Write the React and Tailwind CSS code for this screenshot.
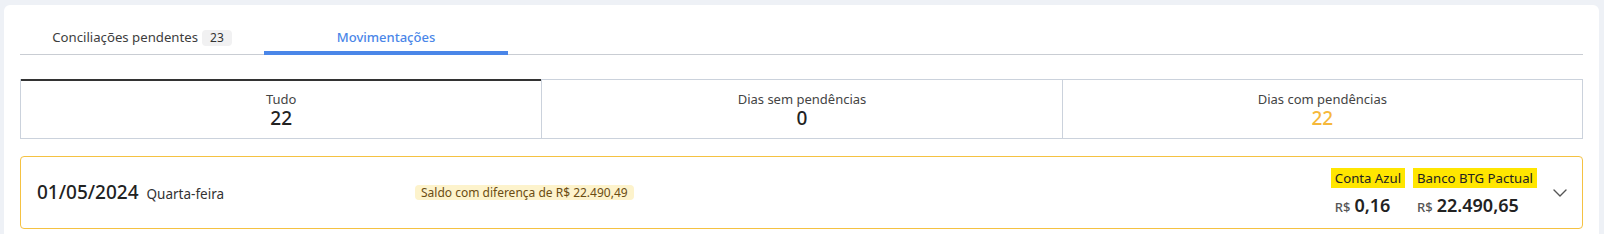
import { ChevronDown } from 'lucide-react'

const filters = [
  { label: 'Tudo', value: '22', active: true },
  { label: 'Dias sem pendências', value: '0' },
  { label: 'Dias com pendências', value: '22', warn: true },
]

function Tabs() {
  return (
    <div className="flex border-b border-[#c9cdd3]">
      <button className="flex h-[33px] w-[244px] items-center justify-center gap-1 text-[13.2px] text-[#3d3d3d]">
        Conciliações pendentes
        <span className="rounded-[4px] bg-[#f1f1f2] px-2 py-px text-[12px] leading-[14px] text-[#333]">23</span>
      </button>
      <button className="relative flex h-[33px] w-[244px] items-center justify-center text-[13px] font-medium text-[#4a86e8]">
        Movimentações
        <span className="absolute inset-x-0 -bottom-px h-[4px] bg-[#4a86e8]" />
      </button>
    </div>
  )
}

function FilterBar() {
  return (
    <div className="mt-6 grid grid-cols-3 border-x border-b border-[#cbd2dc]">
      {filters.map((item, index) => (
        <div
          key={item.label}
          className={`flex flex-col items-center pt-[10px] pb-[9px] ${
            item.active ? 'border-t-2 border-t-[#333]' : 'border-t border-t-[#cbd2dc] pt-[11px]'
          } ${index > 0 ? 'border-l border-l-[#cbd2dc]' : ''}`}
        >
          <span className="text-[13px] leading-4 text-[#444]">{item.label}</span>
          <span className={`text-[19px] font-medium leading-[22px] ${item.warn ? 'text-[#f6b83a]' : 'text-[#222]'}`}>
            {item.value}
          </span>
        </div>
      ))}
    </div>
  )
}

function Balance({ bank, amount }) {
  return (
    <div className="flex flex-col items-start">
      <span className="bg-[#ffe600] px-1 text-[13.2px] leading-5 text-[#222]">{bank}</span>
      <span className="mt-[6px] flex items-baseline gap-1 pl-1 text-[#222]">
        <span className="text-[13px] font-medium text-[#555]">R$</span>
        <span className="text-[18px] font-semibold leading-[22px]">{amount}</span>
      </span>
    </div>
  )
}

function DayCard() {
  return (
    <div className="mt-[17px] flex h-[73px] items-center rounded-[4px] border border-[#f5c242] pl-4 pr-[10px]">
      <div className="flex w-[378px] items-baseline gap-2">
        <span className="text-[19px] font-medium text-[#222]">01/05/2024</span>
        <span className="text-[13.5px] text-[#333]">Quarta-feira</span>
      </div>
      <span className="rounded-[4px] bg-[#fdf3cc] px-[6px] text-[12px] leading-[15px] text-[#6b4c12]">
        Saldo com diferença de R$ 22.490,49
      </span>
      <div className="ml-auto flex items-center gap-[11px]">
        <div className="flex gap-2">
          <Balance bank="Conta Azul" amount="0,16" />
          <Balance bank="Banco BTG Pactual" amount="22.490,65" />
        </div>
        <ChevronDown className="h-6 w-6 text-[#555]" strokeWidth={1.4} />
      </div>
    </div>
  )
}

export default function App() {
  return (
    <div className="min-h-screen bg-[#eef1f6] pl-1 pr-[5px] pt-[5px] font-['Noto_Sans',sans-serif]">
      <div className="rounded-md bg-white px-4 pt-4 pb-3">
        <Tabs />
        <FilterBar />
        <DayCard />
      </div>
    </div>
  )
}
